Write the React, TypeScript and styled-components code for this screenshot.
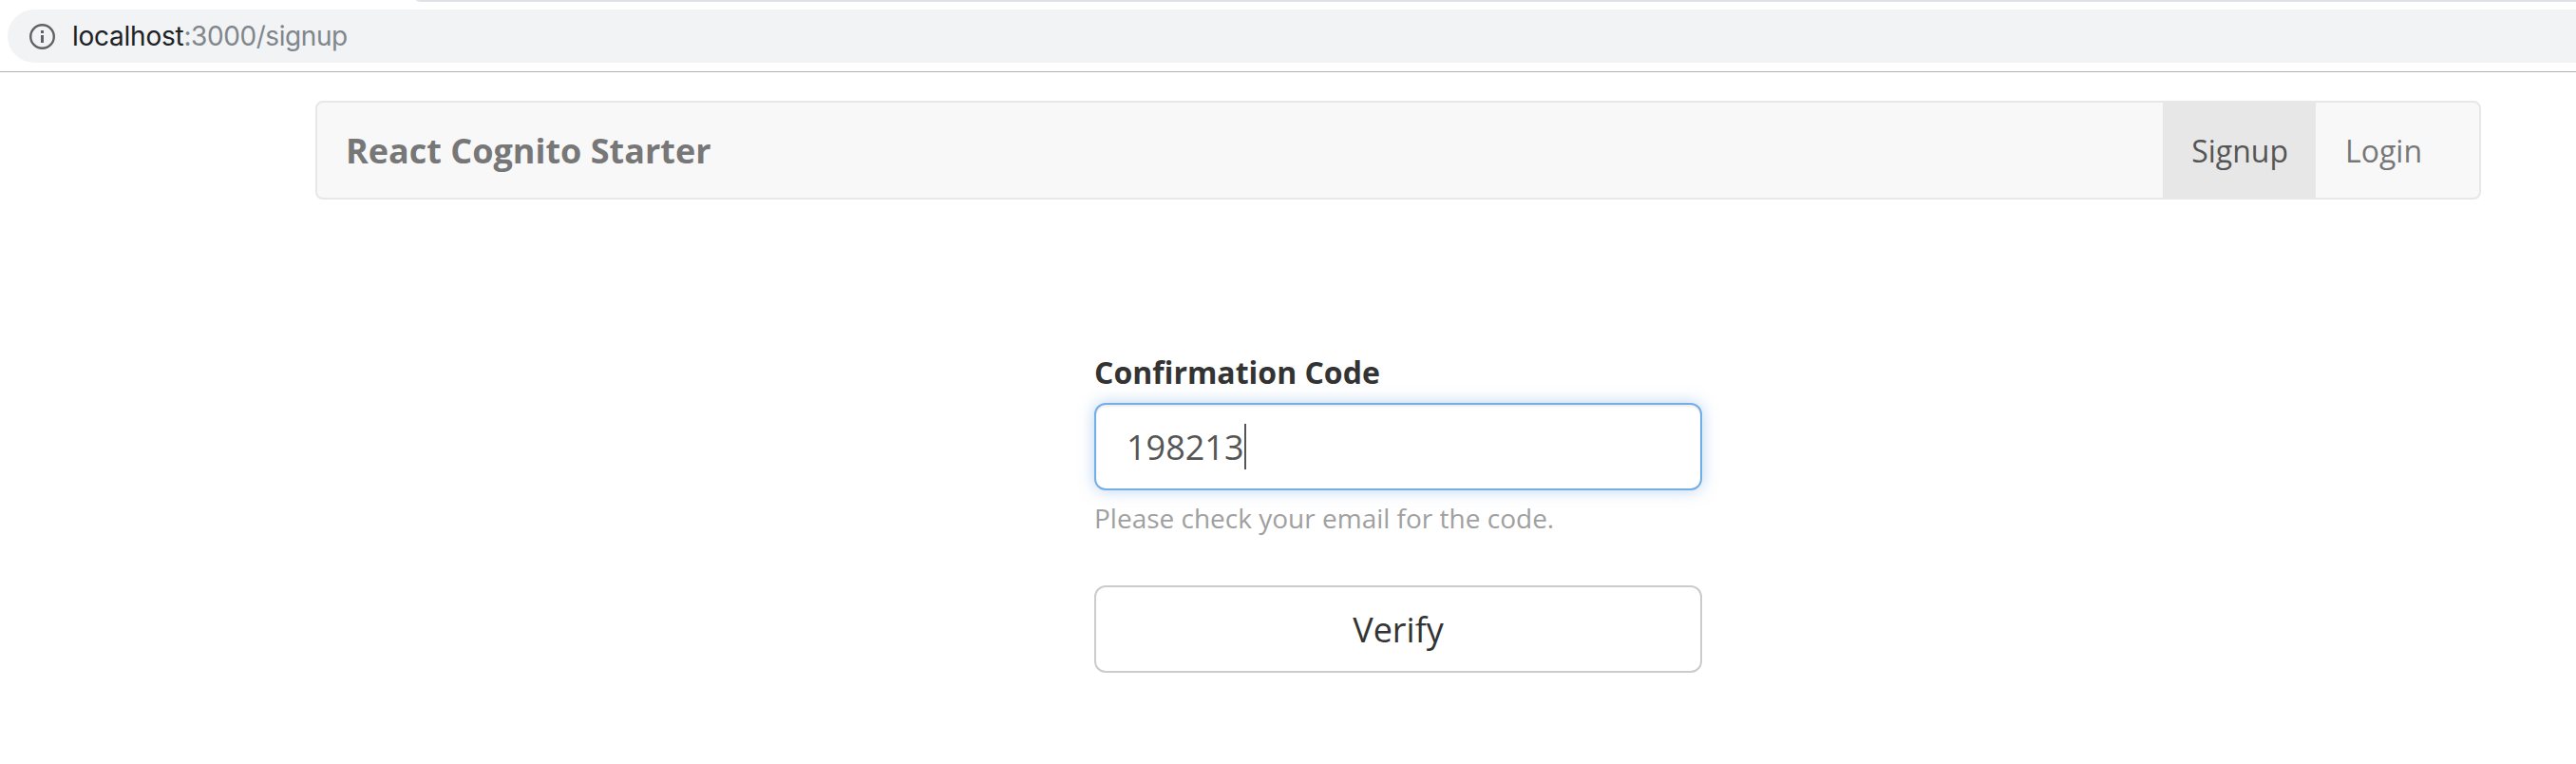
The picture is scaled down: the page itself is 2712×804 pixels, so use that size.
import React, { useState } from 'react';
import styled, { createGlobalStyle } from 'styled-components';

const GlobalStyle = createGlobalStyle`
  *, *::before, *::after { box-sizing: border-box; }
  body {
    margin: 0;
    background: #fff;
    color: #333;
    font-family: 'Open Sans', 'Noto Sans', sans-serif;
    font-size: 32px;
    line-height: 1.42857;
    overflow: hidden;
  }
`;

const Page = styled.div`
  height: 804px;
  overflow: hidden;
`;

const BrowserBar = styled.header`
  height: 76px;
  display: flex;
  flex-direction: column;
  background: #fff;
  border-bottom: 1px solid #b4b4b6;
`;

const TabStripEdge = styled.div`
  height: 2px;
  margin: 0 0 8px 438px;
  background: #dee1e6;
  border-bottom-left-radius: 8px 2px;
`;

const AddressField = styled.div`
  height: 56px;
  margin-left: 8px;
  padding-left: 22px;
  display: flex;
  align-items: center;
  background: #f1f3f4;
  border-radius: 28px 0 0 28px;
`;

const InfoIcon = styled.svg`
  width: 29px;
  height: 29px;
  margin-right: 17px;
  flex: none;
`;

const Url = styled.span`
  font-family: Inter, Roboto, sans-serif;
  font-size: 28px;
  letter-spacing: -0.42px;
  line-height: 56px;
  color: #80868b;
`;

const Host = styled.span`
  color: #202124;
  letter-spacing: -0.25px;
`;

const Container = styled.main`
  width: 2280px;
  margin: 30px 0 0 332px;
`;

const Navbar = styled.nav`
  height: 104px;
  display: flex;
  justify-content: space-between;
  padding-right: 30px;
  background: #f8f8f8;
  border: 2px solid #e7e7e7;
  border-radius: 8px;
`;

const Brand = styled.span`
  padding: 0 30px;
  font-size: 36px;
  font-weight: 700;
  line-height: 102px;
  color: #777;
`;

const NavList = styled.div`
  display: flex;
  height: 100px;
`;

const NavItem = styled.a<{ $active?: boolean }>`
  padding: 0 30px;
  line-height: 101px;
  text-decoration: none;
  color: ${p => (p.$active ? '#555' : '#777')};
  background: ${p => (p.$active ? '#e7e7e7' : 'transparent')};

  &:first-child { padding: 0 29.5px 0 30.5px; }
  &:last-child { padding-left: 30.5px; }
`;

const Form = styled.form`
  width: 640px;
  margin: 159px auto 0;
  display: flex;
  flex-direction: column;
`;

const Label = styled.label`
  height: 46px;
  margin-bottom: 9px;
  font-weight: 700;
`;

const CodeField = styled.div`
  height: 92px;
  padding: 0 32px;
  display: flex;
  align-items: center;
  font-size: 36px;
  color: #555;
  background: #fff;
  border: 2px solid #73aee6;
  border-radius: 12px;
  box-shadow: inset 0 2px 2px rgba(0, 0, 0, 0.075), 0 0 16px rgba(115, 170, 230, 0.5);
`;

const Code = styled.span`
  padding-top: 1px;
`;

const Caret = styled.span`
  width: 2px;
  height: 48px;
  background: #555;
`;

const HelpText = styled.span`
  height: 40px;
  margin: 9px 0 51px;
  font-size: 28px;
  line-height: 40px;
  color: #a0a0a0;
`;

const VerifyButton = styled.button`
  height: 92px;
  padding: 2px 0 0;
  font: inherit;
  font-size: 36px;
  color: #333;
  background: #fff;
  border: 2px solid #ccc;
  border-radius: 12px;
`;

export default function App() {
  const [code] = useState('198213');
  return (
    <Page>
      <GlobalStyle />
      <BrowserBar>
        <TabStripEdge />
        <AddressField>
          <InfoIcon viewBox="0 0 29 29" fill="none">
            <circle cx="14.5" cy="14.5" r="12.3" stroke="#5f6368" strokeWidth="2.4" />
            <path d="M13 8h3v3h-3zM13 13h3v8h-3z" fill="#5f6368" />
          </InfoIcon>
          <Url><Host>localhost</Host>:3000/signup</Url>
        </AddressField>
      </BrowserBar>
      <Container>
        <Navbar>
          <Brand>React Cognito Starter</Brand>
          <NavList>
            <NavItem $active>Signup</NavItem>
            <NavItem>Login</NavItem>
          </NavList>
        </Navbar>
        <Form>
          <Label>Confirmation Code</Label>
          <CodeField>
            <Code>{code}</Code>
            <Caret />
          </CodeField>
          <HelpText>Please check your email for the code.</HelpText>
          <VerifyButton type="button">Verify</VerifyButton>
        </Form>
      </Container>
    </Page>
  );
}
